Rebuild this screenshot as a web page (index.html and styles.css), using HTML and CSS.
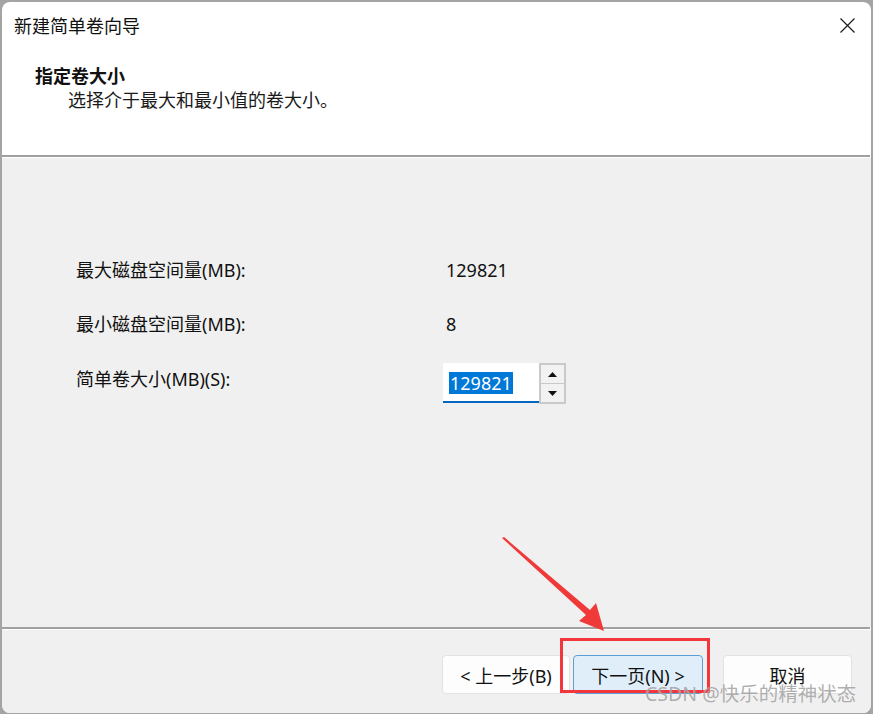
FILE: index.html
```html
<!DOCTYPE html>
<html lang="zh-CN">
<head>
<meta charset="utf-8">
<title>新建简单卷向导</title>
<link rel="stylesheet" href="styles.css">
</head>
<body>
<div class="window">
  <div class="titlebar">
    <span class="title">新建简单卷向导</span>
    <svg class="close" width="15" height="15" viewBox="0 0 15 15"><path d="M0.5 0.5 L14.5 14.5 M14.5 0.5 L0.5 14.5" stroke="#1a1a1a" stroke-width="1.2" fill="none"/></svg>
  </div>
  <div class="header">
    <div class="h-title">指定卷大小</div>
    <div class="h-sub">选择介于最大和最小值的卷大小。</div>
  </div>
  <div class="sep"></div>
  <div class="content">
    <div class="row r1"><span class="label">最大磁盘空间量(MB):</span><span class="value">129821</span></div>
    <div class="row r2"><span class="label">最小磁盘空间量(MB):</span><span class="value">8</span></div>
    <div class="row r3">
      <span class="label">简单卷大小(MB)(S):</span>
      <div class="spin">
        <div class="input"><span class="sel">129821</span></div>
        <div class="spin-btns">
          <div class="sbtn"><svg width="9" height="5" viewBox="0 0 9 5"><path d="M4.5 0 L9 5 L0 5 Z" fill="#111"/></svg></div>
          <div class="sbtn"><svg width="9" height="5" viewBox="0 0 9 5"><path d="M0 0 L9 0 L4.5 5 Z" fill="#111"/></svg></div>
        </div>
      </div>
    </div>
  </div>
  <div class="sep"></div>
  <div class="footer">
    <button class="btn b-back">&lt; 上一步(B)</button>
    <button class="btn b-next">下一页(N) &gt;</button>
    <button class="btn b-cancel">取消</button>
  </div>
</div>
<div class="redbox"></div>
<svg class="arrow" width="873" height="714" viewBox="0 0 873 714">
  <polygon points="502,538 504,537 590,610 596,603 604,631 579,621 586,615" fill="#f03a3a"/>
</svg>
<div class="watermark">CSDN @快乐的精神状态</div>
</body>
</html>
```
FILE: styles.css
```css
html, body {
  margin: 0;
  padding: 0;
}
body {
  width: 873px;
  height: 714px;
  overflow: hidden;
  background: #a4a4a4;
  position: relative;
  font-family: "Noto Sans", "Noto Sans CJK SC", sans-serif;
  color: #111;
}
.window {
  margin: 2px 0 0 2px;
  width: 869px;
  height: 711px;
  background: #ffffff;
  border-radius: 8px;
  overflow: hidden;
  display: flex;
  flex-direction: column;
}
.titlebar {
  height: 46px;
  display: flex;
  align-items: center;
  justify-content: space-between;
  padding: 0 16px 0 12px;
}
.title {
  font-size: 18px;
  line-height: 24px;
  margin-top: 1px;
}
.close {
  display: block;
}
.header {
  height: 107px;
  box-sizing: border-box;
  padding: 16px 0 0 33px;
}
.h-title {
  font-size: 18px;
  font-weight: bold;
  line-height: 24px;
}
.h-sub {
  font-size: 18px;
  line-height: 24px;
  margin-left: 33px;
  color: #1a1a1a;
}
.sep {
  height: 2px;
  background: #a0a0a0;
  border-bottom: 1px solid #ffffff;
  margin-right: 1px;
}
.content {
  height: 469px;
  box-sizing: border-box;
  background: #f0f0f0;
  padding: 92px 0 0 74px;
}
.row {
  display: flex;
  align-items: center;
  height: 40px;
  font-size: 18px;
}
.r2 { margin-top: 14px; }
.r3 { margin-top: 19px; align-items: flex-start; height: 42px; }
.label {
  width: 370px;
  line-height: 24px;
}
.r3 .label { margin-top: 4px; }
.value { line-height: 24px; }
.spin {
  display: flex;
  margin-left: -3px;
}
.input {
  width: 96px;
  height: 40px;
  box-sizing: border-box;
  background: #ffffff;
  border-bottom: 2px solid #0067c0;
  padding: 8px 0 0 6px;
}
.sel {
  display: inline-block;
  background: #0078d7;
  color: #ffffff;
  line-height: 22px;
  height: 22px;
  padding: 0 1px 0 1px;
}
.spin-btns {
  width: 27px;
  height: 41px;
  box-sizing: border-box;
  border: 2px solid #c9c9c9;
  background: #c9c9c9;
  display: flex;
  flex-direction: column;
  gap: 1px;
}
.sbtn {
  flex: 1;
  background: #f2f2f2;
  display: flex;
  align-items: center;
  justify-content: center;
}
.footer {
  flex: 1;
  background: #f0f0f0;
  display: flex;
  justify-content: flex-end;
  align-items: flex-start;
  padding: 25px 19px 0 0;
}
.btn {
  height: 39px;
  box-sizing: border-box;
  border: 1px solid #e2e2e2;
  border-radius: 4px;
  background: #fdfdfd;
  font-family: "Noto Sans", "Noto Sans CJK SC", sans-serif;
  font-size: 18px;
  color: #111;
  padding: 0;
}
.b-back { width: 128px; }
.b-next {
  width: 130px;
  margin-left: 3px;
  background: #e0eef9;
  border-color: #5c9fd8;
}
.b-cancel {
  width: 129px;
  margin-left: 20px;
}
.redbox {
  position: absolute;
  left: 560px;
  top: 638px;
  width: 150px;
  height: 55px;
  box-sizing: border-box;
  border: 3px solid #f2363c;
}
.arrow {
  position: absolute;
  left: 0;
  top: 0;
  pointer-events: none;
}
.watermark {
  position: absolute;
  left: 645px;
  top: 681px;
  font-family: "Noto Sans", "Noto Sans CJK SC", sans-serif;
  font-size: 19.5px;
  line-height: 26px;
  color: rgba(140, 140, 140, 0.7);
  text-shadow: 0 0 1px rgba(255,255,255,0.6);
  white-space: nowrap;
}
```
